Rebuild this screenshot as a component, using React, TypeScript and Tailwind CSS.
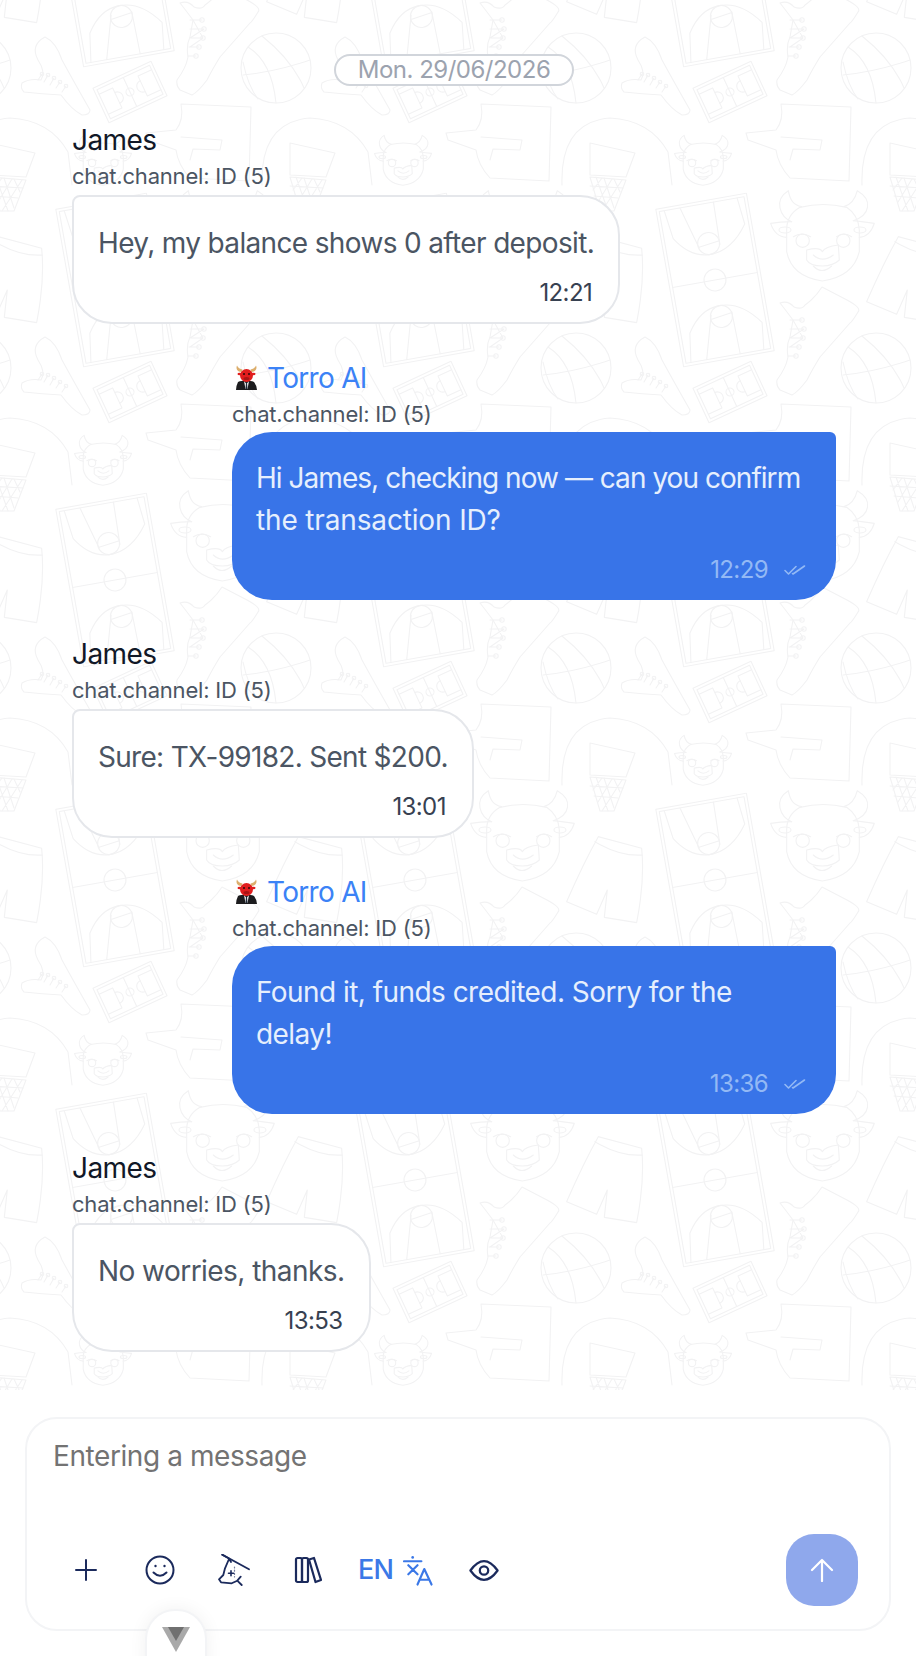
import React from 'react'

const navy = '#1b2a5c'

const messages: { from: string; text: React.ReactNode; time: string; tracking?: string }[] = [
  { from: 'user', text: 'Hey, my balance shows 0 after deposit.', time: '12:21', tracking: 'tracking-[-0.65px]' },
  {
    from: 'bot',
    text: (
      <>
        Hi James, checking now <span className="tracking-[-7px]">—</span>
        <span className="ml-[7px]"> can you confirm</span>
        <br />
        <span className="tracking-[-0.15px]">the transaction ID?</span>
      </>
    ),
    time: '12:29',
    tracking: 'tracking-[-0.96px]',
  },
  { from: 'user', text: 'Sure: TX-99182. Sent $200.', time: '13:01', tracking: 'tracking-[-0.7px]' },
  {
    from: 'bot',
    text: (
      <>
        Found it, funds credited. Sorry for the
        <br />
        delay!
      </>
    ),
    time: '13:36',
    tracking: 'tracking-[-0.55px]',
  },
  { from: 'user', text: 'No worries, thanks.', time: '13:53', tracking: 'tracking-[-0.55px]' },
]

// drawn in its own coordinates, placed twice at different scales
const BullHead = () => (
  <>
    <path d="M540 82Q610 65 680 82Q715 105 718 150L718 215Q700 290 607 303Q515 290 500 215L500 150Q500 105 540 82Z" />
    <path d="M515 125C480 110 460 60 505 32C510 60 520 75 545 80" />
    <path d="M700 122C750 105 760 60 712 32C705 60 690 75 672 80" />
    <path d="M515 125Q480 125 452 130Q465 170 500 172M700 122Q730 125 763 130Q750 170 718 172" />
    <ellipse cx="495" cy="150" rx="18" ry="9" />
    <ellipse cx="720" cy="150" rx="18" ry="9" />
    <path d="M520 170Q545 155 572 170M650 170Q672 155 695 170" />
    <circle cx="548" cy="182" r="20" />
    <circle cx="670" cy="182" r="20" />
    <path d="M560 210Q600 200 607 215Q615 200 655 195L658 240Q640 258 607 258Q570 258 560 240Z" />
    <path d="M580 225Q607 250 640 225M580 258Q605 285 635 258" />
  </>
)

const Court = () => (
  <>
    <rect x="-46" y="-80" width="92" height="160" />
    <rect x="-43" y="-77" width="86" height="154" />
    <path d="M-43 0H43" />
    <circle cx="0" cy="0" r="11" />
    <path d="M-38 -77L-34 -48Q-20 -26 0 -26Q22 -26 39 -50L36 -77" />
    <path d="M-22 -77L-10 -34M12 -77L11 -34M-10 -35L11 -38" />
    <circle cx="0" cy="-37" r="11" />
    <path d="M-38 77L-34 48Q-20 26 0 26Q22 26 39 50L36 77" />
    <path d="M-22 77L-10 34M12 77L11 34M-10 38L11 35" />
    <circle cx="0" cy="37" r="11" />
  </>
)

const TileArt = () => (
  <g>
    <g transform="translate(115 280) rotate(-10)">
      <Court />
    </g>
    <g transform="translate(130 92) rotate(-25)">
      <rect x="-32" y="-19" width="64" height="38" />
      <rect x="-29" y="-16" width="58" height="32" />
      <path d="M0 -16V16" />
      <circle cx="0" cy="0" r="4" />
      <path d="M-29 -11H-14V11H-29M29 -11H14V11H29" />
      <path d="M-14 -6A6 6 0 0 1 -14 6M14 -6A6 6 0 0 0 14 6" />
    </g>
    <g transform="translate(20 180) scale(0.3333)" strokeWidth="3.4">
      <BullHead />
      <path d="M835 170L965 205Q975 300 950 428L853 412L862 330L830 403L740 365Q790 250 835 170ZM825 185Q900 230 968 225" />
    </g>
    <g transform="translate(-8.8 129.5) scale(0.184)" strokeWidth="6">
      <BullHead />
    </g>
    <path d="M222 -13L247 0Q262 8 258 12Q252 22 250 23Q235 40 220 57Q212 70 207 80Q198 92 192 95L180 90Q176 86 177 80Q186 68 188 57Q186 45 190 37L193 20Q184 8 180 3Q188 0 194 7Q202 10 205 5Q215 -2 222 -13Z" />
    <path d="M190 20L202 20M190 29L204 29M190 38L203 38M189 47L199 47M188 56L196 56M193 20L203 38M190 38L204 29M190 47L203 38" />
    <circle cx="202" cy="20" r="2.2" />
    <circle cx="204" cy="29" r="2.2" />
    <circle cx="203" cy="38" r="2.2" />
    <circle cx="199" cy="47" r="2.2" />
    <circle cx="196" cy="56" r="2.2" />
    <path d="M45 37Q56 42 62 60Q74 82 90 110Q90 115 82 115Q72 110 61 95Q42 94 24 92Q20 88 22 83Q30 78 41 80Q46 72 38 60Q30 45 45 37Z" />
    <path d="M38 80L42 74M44 82L48 75M50 85L54 78M56 88L60 82M62 92L66 86" />
    <circle cx="42" cy="74" r="1.8" />
    <circle cx="48" cy="75" r="1.8" />
    <circle cx="54" cy="78" r="1.8" />
    <circle cx="60" cy="82" r="1.8" />
    <circle cx="66" cy="86" r="1.8" />
    <circle cx="276" cy="68" r="35" />
    <path d="M248 47Q272 62 276 103M262 36Q292 60 304 88M243 75Q275 72 310 60M258 99Q248 86 243 62" />
    <path d="M181 104L251 107L249 181L190 178Q178 165 176 150L148 140L146 133L176 130Q184 120 181 104Z" />
    <path d="M181 137L222 140L220 150L193 149L190 160" />
    <path d="M262 185Q260 122 310 118Q350 120 368 152L372 185" />
    <path d="M290 143L335 153L326 177L290 175Z" />
    <path d="M290 177L326 180L314 211L300 211Z" />
    <path d="M296 177L308 211M304 178L314 208M314 179L320 192M322 180L302 211M312 179L298 202M302 178L293 190M290 186L323 188M294 196L318 198" />
  </g>
)

const Offsets = [
  [0, 0],
  [300, 0],
  [-300, 0],
  [0, 300],
  [0, -300],
  [-300, -300],
  [300, -300],
  [-300, 300],
  [300, 300],
]

const PatternBackground = () => (
  <svg className="absolute inset-0 h-full w-full" aria-hidden="true">
    <defs>
      <pattern id="sports" width="300" height="300" patternUnits="userSpaceOnUse">
        <g fill="none" stroke="#f2f2f3" strokeWidth="1.1" strokeLinejoin="round" strokeLinecap="round">
          {Offsets.map(([x, y]) => (
            <g key={`${x}_${y}`} transform={`translate(${x} ${y})`}>
              <TileArt />
            </g>
          ))}
        </g>
      </pattern>
    </defs>
    <rect width="100%" height="100%" fill="url(#sports)" />
  </svg>
)

const BotAvatar = () => (
  <svg width="26" height="26" viewBox="0 0 26 26" className="shrink-0">
    <path d="M6 17C10 15 18 15 22 17Q25 21 25 25H4Q4 21 6 17Z" fill="#1c1c1e" />
    <path d="M12 16L14.5 19L17 16L15.5 24H13.5Z" fill="#f4f4f5" />
    <path d="M14 18H15L15.5 24H13.5Z" fill="#1f2937" />
    <path d="M9.5 7C5.5 7 3.5 3.5 5 0.5C6 3 8 4 10.5 4.5Z" fill="#dcae6c" />
    <path d="M19.5 7C23.5 7 25.5 3.5 24 0.5C23 3 21 4 18.5 4.5Z" fill="#dcae6c" />
    <ellipse cx="14.5" cy="10.5" rx="6.5" ry="6.5" fill="#e11d1d" />
    <ellipse cx="7.5" cy="9" rx="2" ry="1.2" fill="#e11d1d" />
    <ellipse cx="21.5" cy="9" rx="2" ry="1.2" fill="#e11d1d" />
    <circle cx="12" cy="9" r="1" fill="#2b0a0a" />
    <circle cx="17" cy="9" r="1" fill="#2b0a0a" />
    <ellipse cx="14.5" cy="13.5" rx="3" ry="1.6" fill="#a81414" />
  </svg>
)

const DoubleCheck = () => (
  <svg width="22" height="12" viewBox="0 0 22 12" fill="none" stroke="#93b9f5" strokeWidth="1.6" strokeLinecap="round" strokeLinejoin="round">
    <path d="M1 6.5L4.5 10L12 2.5" />
    <path d="M8.5 9.5L9 10L20.5 2" />
  </svg>
)

const Message = ({ from, text, time, tracking }: { from: string; text: React.ReactNode; time: string; tracking?: string }) => {
  if (from === 'bot') {
    return (
      <div className="flex flex-col items-end">
        <div className="w-[604px]">
          <div className="flex h-[36px] items-center gap-[9px] text-[28px] tracking-[-0.7px] text-[#3b82f6]">
            <BotAvatar />
            <span>Torro AI</span>
          </div>
          <div className="h-[36px] text-[22px] leading-[36px] tracking-[-0.2px] text-[#4b5563]">chat.channel: ID (5)</div>
          <div className="rounded-[40px] rounded-tr-[6px] bg-[#3874e8] px-6 pt-[25px] pb-[15px]">
            <p className={`text-[28px] leading-[42px] text-[#e6effd] ${tracking}`}>{text}</p>
            <div className="mt-[14px] flex h-[30px] items-center justify-end gap-[16px] pr-[6px] text-[24px] tracking-[-0.6px] text-[#93b9f5]">
              <span>{time}</span>
              <DoubleCheck />
            </div>
          </div>
        </div>
      </div>
    )
  }

  return (
    <div className="flex flex-col items-start">
      <div className="h-[36px] text-[28px] leading-[34px] tracking-[-0.6px] text-[#111827]">James</div>
      <div className="h-[36px] text-[22px] leading-[34px] tracking-[-0.2px] text-[#4b5563]">chat.channel: ID (5)</div>
      <div className="rounded-[40px] rounded-tl-[8px] border-2 border-[#e5e7eb] bg-white px-6 pt-[25px] pb-[14px]">
        <p className={`text-[28px] leading-[42px] text-[#4b5563] ${tracking}`}>{text}</p>
        <div className="mt-[14px] flex h-[30px] items-center justify-end pr-[2px] text-[24px] tracking-[-0.6px] text-[#374151]">
          {time}
        </div>
      </div>
    </div>
  )
}

const ToolIcon = ({ children }: { children: React.ReactNode }) => (
  <button className="flex h-8 w-8 items-center justify-center">{children}</button>
)

const App = () => {
  return (
    <div className="relative h-[1656px] w-[916px] overflow-hidden bg-white font-['Inter',sans-serif]">
      <div className="relative h-[1390px] overflow-hidden">
        <PatternBackground />
        <div className="relative flex flex-col gap-[36.5px] pt-[54px] pr-[80px] pl-[72px]">
          <div className="flex justify-center">
            <span className="flex h-8 w-[240px] items-center justify-center rounded-full border-2 border-[#d1d5db] bg-white text-[24px] tracking-[-0.5px] text-[#9ca3af]">
              Mon. 29/06/2026
            </span>
          </div>
          {messages.map((m) => (
            <Message key={m.time} from={m.from} text={m.text} time={m.time} tracking={m.tracking} />
          ))}
        </div>
      </div>

      <div className="mx-[25px] mt-[27px] h-[214px] rounded-[32px] border-2 border-[#f3f4f6] bg-white pt-[17px] pr-[31px] pl-[26px]">
        <div className="h-[40px] text-[28px] leading-[40px] tracking-[-0.42px] text-[#737373]">Entering a message</div>
        <div className="mt-[58px] flex h-[72px] items-center justify-between pl-[17px]">
          <div className="flex items-center gap-[34px]">
            <div className="flex items-center gap-[42px]">
              <ToolIcon>
                <svg width="24" height="24" viewBox="0 0 24 24" fill="none" stroke={navy} strokeWidth="2" strokeLinecap="round">
                  <path d="M2 12H22M12 2V22" />
                </svg>
              </ToolIcon>
              <ToolIcon>
                <svg width="30" height="30" viewBox="0 0 30 30" fill="none" stroke={navy} strokeWidth="2" strokeLinecap="round">
                  <circle cx="15" cy="15" r="13.5" />
                  <path d="M8.5 17.5Q15 24 21.5 17.5" />
                  <circle cx="10.5" cy="11" r="1.2" fill={navy} stroke="none" />
                  <circle cx="19.5" cy="11" r="1.2" fill={navy} stroke="none" />
                </svg>
              </ToolIcon>
              <ToolIcon>
                <svg width="32" height="32" viewBox="0 0 32 32" fill="none" stroke={navy} strokeWidth="1.8" strokeLinecap="round" strokeLinejoin="round">
                  <path d="M4.3 0.7L31 15.3" />
                  <path d="M4.3 0.7L11 4.5L13 8M11 5L7 14.3L5.3 21L1 25.3L3 28.3L13.7 29.3L19.3 26.7L23.7 31M19.3 26.7L22.7 22.7" />
                  <path d="M10.5 19.3H15.5M13 16.8V21.8" strokeWidth="1.6" />
                  <path d="M16.5 13V23" strokeDasharray="1 2.2" strokeWidth="1.2" opacity="0.6" />
                </svg>
              </ToolIcon>
              <ToolIcon>
                <svg width="28" height="28" viewBox="0 0 28 28" fill="none" stroke={navy} strokeWidth="2.2" strokeLinejoin="round">
                  <rect x="2" y="2" width="6" height="24" rx="1.5" />
                  <rect x="8" y="2" width="6" height="24" rx="1.5" />
                  <path d="M15 3.5L20 2L27 24L21.5 26Z" />
                </svg>
              </ToolIcon>
            </div>
            <div className="flex items-center gap-[10px]">
              <span className="text-[27px] font-medium tracking-[-0.7px] text-[#3b78e7]">EN</span>
              <svg width="30" height="31" viewBox="0 0 31 31" fill="none" stroke="#3b78e7" strokeWidth="2.2" strokeLinecap="round" strokeLinejoin="round">
                <path d="M1 6H19M5.5 10L15 19.5M15 10L5.5 19.5" />
                <circle cx="10" cy="2" r="1.4" fill="#3b78e7" stroke="none" />
                <path d="M15 30L22 14L29.5 30M17.5 25H27" />
              </svg>
            </div>
            <svg width="30" height="23" viewBox="0 0 32 24" fill="none" stroke={navy} strokeWidth="2.4" className="ml-[2px]">
              <path d="M1.5 12Q16 -8 30.5 12Q16 32 1.5 12Z" strokeLinejoin="round" />
              <circle cx="16" cy="12" r="4.5" />
            </svg>
          </div>
          <button className="flex h-[72px] w-[72px] items-center justify-center rounded-[28px] bg-[#8fa8ec]">
            <svg width="24" height="24" viewBox="0 0 24 24" fill="none" stroke="white" strokeWidth="2.2" strokeLinecap="round" strokeLinejoin="round">
              <path d="M12 23V2M2 12L12 2L22 12" />
            </svg>
          </button>
        </div>
      </div>

      <div className="absolute top-[1609px] left-[145px] flex h-[70px] w-[62px] justify-center rounded-t-[30px] border-2 border-[#f3f4f6] bg-white pt-[16px] shadow-[0_0_18px_rgba(0,0,0,0.06)]">
        <svg width="28" height="25" viewBox="0 0 28 25">
          <path d="M0 0H28L14 25Z" fill="#a9a9a9" />
          <path d="M6 0H22L14 14Z" fill="#707070" />
        </svg>
      </div>
    </div>
  )
}

export default App
